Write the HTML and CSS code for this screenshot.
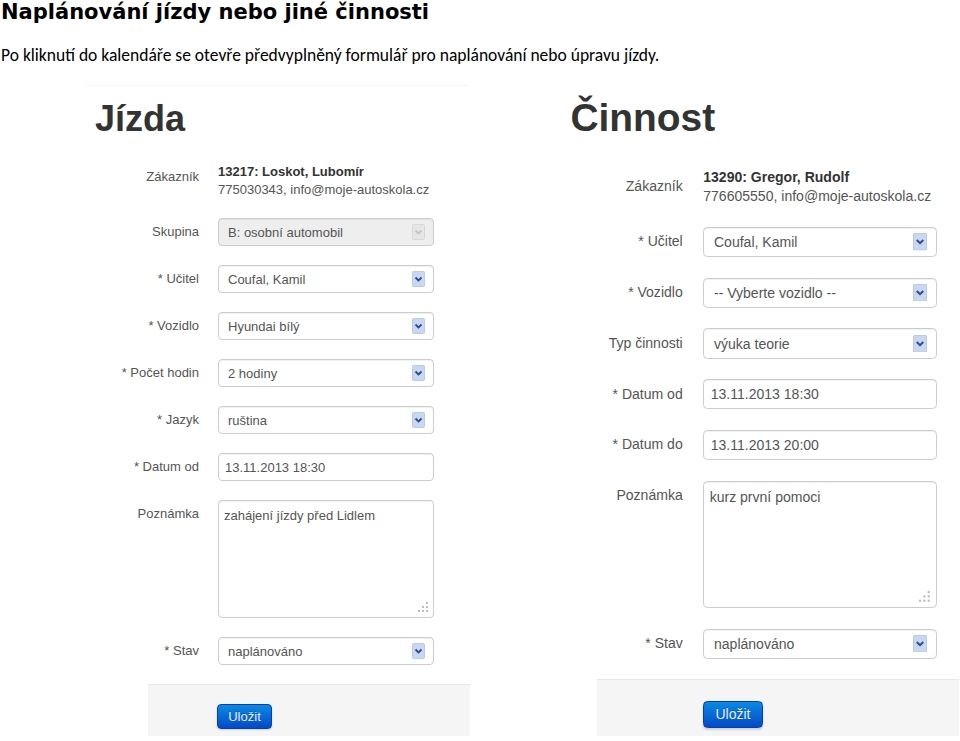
FILE: index.html
```html
<!DOCTYPE html>
<html lang="cs">
<head>
  <meta charset="UTF-8" />
  <title>Naplánování jízdy nebo jiné činnosti</title>
  <link rel="stylesheet" href="styles.css">
</head>
<body>
  <h1 class="doc-title">Naplánování jízdy nebo jiné činnosti</h1>
  <p class="doc-intro">Po kliknutí do kalendáře se otevře předvyplněný formulář pro naplánování nebo úpravu jízdy.</p>

  <div class="shots">
    <!-- Jízda -->
    <div class="shot shot-ride">
      <h2 class="shot-title">Jízda</h2>
      <div class="form">
        <div class="field">
          <label class="field-label">Zákazník</label>
          <div class="customer">
            <strong>13217: Loskot, Lubomír</strong>
            <span>775030343, info@moje-autoskola.cz</span>
          </div>
        </div>
        <div class="field">
          <label class="field-label">Skupina</label>
          <div class="select is-disabled">
            <span>B: osobní automobil</span>
            <svg class="select-arrow" width="13" height="16" viewBox="0 0 13 16"><rect x="0.5" y="0.5" width="12" height="15" rx="1" fill="#e6e6e6" stroke="#d8d8d8"/><path d="M3.5 6.5 L6.5 9.5 L9.5 6.5" stroke="#c4c4c4" stroke-width="1.8" fill="none"/></svg>
          </div>
        </div>
        <div class="field">
          <label class="field-label">* Učitel</label>
          <div class="select">
            <span>Coufal, Kamil</span>
            <svg class="select-arrow" width="13" height="16" viewBox="0 0 13 16"><rect x="0.5" y="0.5" width="12" height="15" rx="1" fill="#c9d8f0" stroke="#b9cbe8"/><path d="M3.5 6.5 L6.5 9.5 L9.5 6.5" stroke="#2d4b88" stroke-width="1.8" fill="none"/></svg>
          </div>
        </div>
        <div class="field">
          <label class="field-label">* Vozidlo</label>
          <div class="select">
            <span>Hyundai bílý</span>
            <svg class="select-arrow" width="13" height="16" viewBox="0 0 13 16"><rect x="0.5" y="0.5" width="12" height="15" rx="1" fill="#c9d8f0" stroke="#b9cbe8"/><path d="M3.5 6.5 L6.5 9.5 L9.5 6.5" stroke="#2d4b88" stroke-width="1.8" fill="none"/></svg>
          </div>
        </div>
        <div class="field">
          <label class="field-label">* Počet hodin</label>
          <div class="select">
            <span>2 hodiny</span>
            <svg class="select-arrow" width="13" height="16" viewBox="0 0 13 16"><rect x="0.5" y="0.5" width="12" height="15" rx="1" fill="#c9d8f0" stroke="#b9cbe8"/><path d="M3.5 6.5 L6.5 9.5 L9.5 6.5" stroke="#2d4b88" stroke-width="1.8" fill="none"/></svg>
          </div>
        </div>
        <div class="field">
          <label class="field-label">* Jazyk</label>
          <div class="select">
            <span>ruština</span>
            <svg class="select-arrow" width="13" height="16" viewBox="0 0 13 16"><rect x="0.5" y="0.5" width="12" height="15" rx="1" fill="#c9d8f0" stroke="#b9cbe8"/><path d="M3.5 6.5 L6.5 9.5 L9.5 6.5" stroke="#2d4b88" stroke-width="1.8" fill="none"/></svg>
          </div>
        </div>
        <div class="field">
          <label class="field-label">* Datum od</label>
          <input class="input" type="text" value="13.11.2013 18:30" />
        </div>
        <div class="field">
          <label class="field-label">Poznámka</label>
          <div class="textarea-wrap">
            <textarea class="textarea">zahájení jízdy před Lidlem</textarea>
            <svg class="grip" width="11" height="11" viewBox="0 0 11 11" fill="#bdbdbd"><rect x="8" y="0" width="2" height="2"/><rect x="8" y="4" width="2" height="2"/><rect x="4" y="4" width="2" height="2"/><rect x="8" y="8" width="2" height="2"/><rect x="4" y="8" width="2" height="2"/><rect x="0" y="8" width="2" height="2"/></svg>
          </div>
        </div>
        <div class="field">
          <label class="field-label">* Stav</label>
          <div class="select">
            <span>naplánováno</span>
            <svg class="select-arrow" width="13" height="16" viewBox="0 0 13 16"><rect x="0.5" y="0.5" width="12" height="15" rx="1" fill="#c9d8f0" stroke="#b9cbe8"/><path d="M3.5 6.5 L6.5 9.5 L9.5 6.5" stroke="#2d4b88" stroke-width="1.8" fill="none"/></svg>
          </div>
        </div>
      </div>
      <div class="form-actions">
        <button class="btn-primary">Uložit</button>
      </div>
    </div>

    <!-- Činnost -->
    <div class="shot shot-task">
      <h2 class="shot-title">Činnost</h2>
      <div class="form">
        <div class="field">
          <label class="field-label label-customer">Zákazník</label>
          <div class="customer">
            <strong>13290: Gregor, Rudolf</strong>
            <span>776605550, info@moje-autoskola.cz</span>
          </div>
        </div>
        <div class="field">
          <label class="field-label">* Učitel</label>
          <div class="select">
            <span>Coufal, Kamil</span>
            <svg class="select-arrow" width="13" height="16" viewBox="0 0 13 16"><rect x="0.5" y="0.5" width="12" height="15" rx="1" fill="#c9d8f0" stroke="#b9cbe8"/><path d="M3.5 6.5 L6.5 9.5 L9.5 6.5" stroke="#2d4b88" stroke-width="1.8" fill="none"/></svg>
          </div>
        </div>
        <div class="field">
          <label class="field-label">* Vozidlo</label>
          <div class="select">
            <span>-- Vyberte vozidlo --</span>
            <svg class="select-arrow" width="13" height="16" viewBox="0 0 13 16"><rect x="0.5" y="0.5" width="12" height="15" rx="1" fill="#c9d8f0" stroke="#b9cbe8"/><path d="M3.5 6.5 L6.5 9.5 L9.5 6.5" stroke="#2d4b88" stroke-width="1.8" fill="none"/></svg>
          </div>
        </div>
        <div class="field">
          <label class="field-label">Typ činnosti</label>
          <div class="select">
            <span>výuka teorie</span>
            <svg class="select-arrow" width="13" height="16" viewBox="0 0 13 16"><rect x="0.5" y="0.5" width="12" height="15" rx="1" fill="#c9d8f0" stroke="#b9cbe8"/><path d="M3.5 6.5 L6.5 9.5 L9.5 6.5" stroke="#2d4b88" stroke-width="1.8" fill="none"/></svg>
          </div>
        </div>
        <div class="field">
          <label class="field-label">* Datum od</label>
          <input class="input" type="text" value="13.11.2013 18:30" />
        </div>
        <div class="field">
          <label class="field-label">* Datum do</label>
          <input class="input" type="text" value="13.11.2013 20:00" />
        </div>
        <div class="field">
          <label class="field-label">Poznámka</label>
          <div class="textarea-wrap">
            <textarea class="textarea">kurz první pomoci</textarea>
            <svg class="grip" width="11" height="11" viewBox="0 0 11 11" fill="#bdbdbd"><rect x="8" y="0" width="2" height="2"/><rect x="8" y="4" width="2" height="2"/><rect x="4" y="4" width="2" height="2"/><rect x="8" y="8" width="2" height="2"/><rect x="4" y="8" width="2" height="2"/><rect x="0" y="8" width="2" height="2"/></svg>
          </div>
        </div>
        <div class="field">
          <label class="field-label">* Stav</label>
          <div class="select">
            <span>naplánováno</span>
            <svg class="select-arrow" width="13" height="16" viewBox="0 0 13 16"><rect x="0.5" y="0.5" width="12" height="15" rx="1" fill="#c9d8f0" stroke="#b9cbe8"/><path d="M3.5 6.5 L6.5 9.5 L9.5 6.5" stroke="#2d4b88" stroke-width="1.8" fill="none"/></svg>
          </div>
        </div>
      </div>
      <div class="form-actions">
        <button class="btn-primary">Uložit</button>
      </div>
    </div>
  </div>
</body>
</html>
```

FILE: styles.css
```css
* { box-sizing: border-box; }
body { margin: 0; background: #fff; color: #000; font-family: "Liberation Sans", Arial, sans-serif; overflow: hidden; }

.doc-title {
  margin: 0;
  padding-left: 1px;
  font-family: "DejaVu Sans", sans-serif;
  font-size: 21px;
  line-height: 24px;
  font-weight: bold;
}

.doc-intro {
  margin: 20px 0 0;
  padding-left: 1px;
  font-family: Carlito, Lato, "Open Sans", sans-serif;
  font-size: 17.5px;
  line-height: 22px;
}

/* the two screenshots */
.shots {
  display: flex;
  align-items: flex-start;
  margin-top: 13px;
}

.shot {
  background: #fff;
  color: #333;
  font-size: 13px;
}

.shot-ride {
  width: 385px;
  margin-left: 85px;
  margin-top: 6px;
  border-top: 1px solid #f6f6f6;
  --actions-left: 63px;
  --actions-pad: 69px;
}

.shot-task {
  zoom: 1.08;
  width: 370px;
  margin-left: 83px;
  margin-top: 3px;
  --actions-left: 35px;
  --actions-pad: 98px;
}
.shot-task .form { margin-top: 26px; }
.shot-task .label-customer { padding-top: 9px; }

.shot-title {
  margin: 13px 0 0 10px;
  font-size: 36px;
  line-height: 40px;
  font-weight: bold;
  color: #333;
}

.form { margin-top: 24px; }

.field {
  display: grid;
  grid-template-columns: 114px 216px;
  column-gap: 19px;
  margin-bottom: 19px;
}

.field-label {
  text-align: right;
  padding-top: 5px;
  line-height: 18px;
  color: #555;
}

.customer {
  display: flex;
  flex-direction: column;
  line-height: 18px;
  color: #555;
}
.customer strong { color: #333; }

.select, .input, .textarea {
  height: 28px;
  border: 1px solid #ccc;
  border-radius: 4px;
  box-shadow: inset 0 1px 1px rgba(0, 0, 0, 0.06);
  background: #fff;
  color: #555;
  font-family: "Liberation Sans", Arial, sans-serif;
  font-size: 13px;
}

.select {
  display: flex;
  align-items: center;
  justify-content: space-between;
  padding: 0 8px 0 9px;
}
.select.is-disabled { background: #eee; }
.select-arrow { display: block; }

.input { width: 100%; padding: 0 6px; outline: none; }

.textarea-wrap { position: relative; }
.textarea {
  display: block;
  width: 100%;
  height: 118px;
  padding: 6px 5px;
  line-height: 18px;
  resize: none;
  outline: none;
}
.grip { position: absolute; right: 5px; bottom: 5px; }

.form-actions {
  height: 52px;
  margin: 18px 0 0 var(--actions-left);
  padding: 19px 0 0 var(--actions-pad);
  background: #f5f5f5;
  border-top: 1px solid #e8e8e8;
}

.btn-primary {
  width: 55px;
  height: 25px;
  padding: 0;
  border: 1px solid #0540a8;
  border-radius: 4px;
  background: linear-gradient(#0a8ae2, #0449c8);
  color: #e8f0ff;
  font-family: "Liberation Sans", Arial, sans-serif;
  font-size: 13px;
  text-shadow: 0 -1px 0 rgba(0, 0, 0, 0.25);
  box-shadow: 0 1px 2px rgba(0, 0, 0, 0.15);
}
```
